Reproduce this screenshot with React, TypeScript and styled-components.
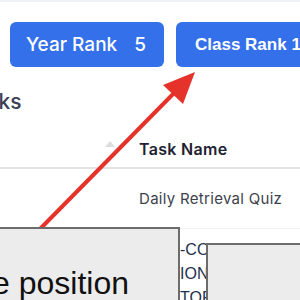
import styled, { createGlobalStyle } from "styled-components";

const GlobalStyle = createGlobalStyle`
	html, body {
		margin: 0;
		padding: 0;
		background: #ffffff;
		overflow: hidden;
	}
`;

const Page = styled.div`
	position: relative;
	width: 300px;
	height: 300px;
	overflow: hidden;
	font-family: "Inter", "Noto Sans", sans-serif;
`;

const TopStrip = styled.div`
	height: 2px;
	background-color: #eef1f8;
`;

const RankRow = styled.div`
	display: flex;
	gap: 12px;
	padding: 20px 0 0 10px;
	white-space: nowrap;
`;

const RankButton = styled.div<{ $width: number; $classic?: boolean }>`
	flex: 0 0 auto;
	display: flex;
	align-items: center;
	box-sizing: border-box;
	width: ${(props) => props.$width}px;
	height: 45px;
	padding-left: ${(props) => (props.$classic ? 19 : 16)}px;
	border-radius: 6px;
	background-color: #3470ea;
	color: #ffffff;
	font-family: ${(props) =>
		props.$classic ? '"Liberation Sans", Arial, sans-serif' : '"Inter", sans-serif'};
	font-size: ${(props) => (props.$classic ? 17 : 19)}px;
	font-weight: ${(props) => (props.$classic ? 700 : 500)};
`;

const RankValue = styled.span`
	margin-left: 17px;
`;

const SectionTitle = styled.h2`
	margin: 22px 0 0 -37px;
	font-size: 21px;
	font-weight: 500;
	color: #3b4054;
	line-height: 26px;
`;

const TaskTable = styled.div`
	margin-top: 16px;
`;

const HeaderRow = styled.div`
	display: grid;
	grid-template-columns: 139px 1fr;
	align-items: center;
	height: 36px;
	border-bottom: 2px solid #e4e4e6;
`;

const SortCell = styled.div`
	display: flex;
	justify-content: flex-end;
	padding-right: 24px;
	padding-bottom: 10px;
`;

const SortArrow = styled.span`
	width: 0;
	height: 0;
	border-left: 5px solid transparent;
	border-right: 5px solid transparent;
	border-bottom: 6px solid #dcdcdc;
`;

const HeaderCell = styled.div`
	font-size: 16px;
	font-weight: 600;
	color: #1f2233;
	letter-spacing: 0.3px;
`;

const BodyRow = styled.div`
	display: grid;
	grid-template-columns: 139px 1fr;
	align-items: center;
	height: 59px;
	border-bottom: 1px solid #eef0f5;
`;

const BodyCell = styled.div`
	grid-column: 2;
	font-size: 15px;
	font-weight: 400;
	color: #3d3f4d;
	letter-spacing: 0.3px;
`;

const TopicRow = styled.div`
	display: grid;
	grid-template-columns: 180px 1fr;
	padding-top: 9px;
`;

const TopicCell = styled.div`
	grid-column: 2;
	font-family: "Liberation Sans", Arial, sans-serif;
	font-size: 16px;
	line-height: 24px;
	color: #22304f;
	white-space: nowrap;
`;

const ArrowLayer = styled.svg`
	position: absolute;
	left: 0;
	top: 0;
	pointer-events: none;
`;

const NoteBox = styled.div<{ $left: number; $top: number; $width: number }>`
	position: absolute;
	left: ${(props) => props.$left}px;
	top: ${(props) => props.$top}px;
	width: ${(props) => props.$width}px;
	height: 120px;
	box-sizing: border-box;
	background-color: #ececec;
	border: 2px solid #6c6c6c;
	overflow: hidden;
`;

const NoteText = styled.div`
	margin: 34px 0 0 -6px;
	font-family: "Liberation Sans", Arial, sans-serif;
	font-size: 32px;
	line-height: 40px;
	color: #111111;
	white-space: nowrap;
`;

const topics = ["-COMPULSORY TASK", "IONS AND ENERGY", "TOPIC REVIEW"];

const App = () => {
	return (
		<>
			<GlobalStyle />
			<Page>
				<TopStrip />
				<RankRow>
					<RankButton $width={154}>
						Year Rank<RankValue>5</RankValue>
					</RankButton>
					<RankButton $width={160} $classic>
						Class Rank 1
					</RankButton>
				</RankRow>
				<SectionTitle>Tasks</SectionTitle>
				<TaskTable>
					<HeaderRow>
						<SortCell>
							<SortArrow />
						</SortCell>
						<HeaderCell>Task Name</HeaderCell>
					</HeaderRow>
					<BodyRow>
						<BodyCell>Daily Retrieval Quiz</BodyCell>
					</BodyRow>
					<TopicRow>
						<TopicCell>
							{topics.map((t) => (
								<div key={t}>{t}</div>
							))}
						</TopicCell>
					</TopicRow>
				</TaskTable>

				<ArrowLayer width="300" height="300" viewBox="0 0 300 300">
					<line
						x1="40"
						y1="229"
						x2="178"
						y2="89"
						stroke="#e5322a"
						strokeWidth="4"
					/>
					<polygon points="195,72 183,104 163,85" fill="#e5322a" />
				</ArrowLayer>
				<NoteBox $left={-4} $top={227} $width={184}>
					<NoteText>e position</NoteText>
				</NoteBox>
				<NoteBox $left={206} $top={243} $width={110} />
			</Page>
		</>
	);
};

export default App;
